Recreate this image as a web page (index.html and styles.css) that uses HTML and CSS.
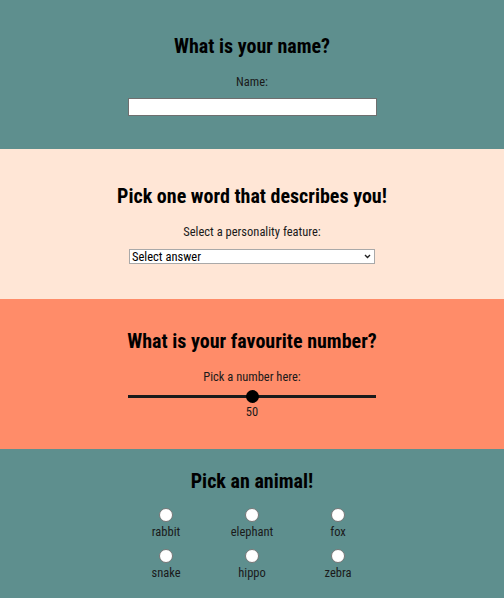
FILE: index.html
```html
<!DOCTYPE html>
<html lang="en">
<head>
<meta charset="utf-8">
<title>Quiz</title>
<link rel="stylesheet" href="styles.css">
</head>
<body>
<section class="section teal first">
  <h2 class="title">What is your name?</h2>
  <label class="label" for="name">Name:</label>
  <input class="text-input" id="name" type="text">
</section>
<section class="section peach">
  <h2 class="title">Pick one word that describes you!</h2>
  <label class="label" for="feature">Select a personality feature:</label>
  <select class="select" id="feature">
    <option>Select answer</option>
  </select>
</section>
<section class="section salmon">
  <h2 class="title">What is your favourite number?</h2>
  <label class="label" for="num">Pick a number here:</label>
  <input class="range" id="num" type="range" min="0" max="100" value="50">
  <div class="value">50</div>
</section>
<section class="section teal">
  <h2 class="title title-tight">Pick an animal!</h2>
  <div class="animals">
    <label class="animal"><input class="radio" type="radio" name="animal"><span>rabbit</span></label>
    <label class="animal"><input class="radio" type="radio" name="animal"><span>elephant</span></label>
    <label class="animal"><input class="radio" type="radio" name="animal"><span>fox</span></label>
    <label class="animal"><input class="radio" type="radio" name="animal"><span>snake</span></label>
    <label class="animal"><input class="radio" type="radio" name="animal"><span>hippo</span></label>
    <label class="animal"><input class="radio" type="radio" name="animal"><span>zebra</span></label>
  </div>
</section>
</body>
</html>
```
FILE: styles.css
```css
html, body {
  margin: 0;
  padding: 0;
}
body {
  font-family: "Roboto Condensed", Roboto, "Liberation Sans", sans-serif;
  font-stretch: 75%;
  color: #111;
}
.section {
  height: 150px;
  display: flex;
  flex-direction: column;
  align-items: center;
  justify-content: center;
}
.first {
  height: 149px;
}
.teal { background: #5e8f8e; }
.peach { background: #ffe6d6; }
.salmon { background: #ff8c69; }
.title {
  margin: 0 0 17px;
  font-size: 20px;
  line-height: 24px;
  font-weight: 700;
  color: #000;
}
.title-tight {
  margin-bottom: 15px;
}
.label {
  font-size: 12.5px;
  line-height: 14px;
  color: #1a1a1a;
}
.text-input {
  box-sizing: border-box;
  margin: 9px 0 0;
  width: 249px;
  height: 18px;
  border: 1px solid #6f6f6f;
  background: #fff;
  padding: 0 2px;
  font: inherit;
}
.select {
  -webkit-appearance: none;
  appearance: none;
  box-sizing: border-box;
  margin: 10px 0 0;
  width: 246px;
  height: 15px;
  border: 1px solid #a9a9a9;
  border-radius: 0;
  background: #fff url("data:image/svg+xml;utf8,<svg xmlns='http://www.w3.org/2000/svg' width='7' height='5' viewBox='0 0 7 5'><path d='M1 1 L3.5 3.5 L6 1' fill='none' stroke='%23222' stroke-width='1.4'/></svg>") no-repeat right 3px center;
  padding: 0 12px 0 2px;
  font-family: inherit;
  font-stretch: 75%;
  font-size: 12.5px;
  line-height: 13px;
  color: #000;
}
.range {
  -webkit-appearance: none;
  appearance: none;
  margin: 4px 0 0;
  width: 248px;
  height: 16px;
  background: transparent;
}
.range::-webkit-slider-runnable-track {
  height: 3px;
  background: #1a1a1a;
}
.range::-webkit-slider-thumb {
  -webkit-appearance: none;
  appearance: none;
  width: 13px;
  height: 13px;
  border-radius: 50%;
  background: #000;
  margin-top: -5px;
}
.value {
  font-size: 12.5px;
  line-height: 14px;
  margin-top: 1px;
  color: #1a1a1a;
}
.animals {
  display: grid;
  grid-template-columns: repeat(3, 86px);
  row-gap: 10px;
}
.animal {
  display: flex;
  flex-direction: column;
  align-items: center;
  gap: 3px;
  font-size: 12.5px;
  line-height: 14px;
  color: #1a1a1a;
}
.radio {
  -webkit-appearance: none;
  appearance: none;
  margin: 0;
  width: 14px;
  height: 14px;
  border-radius: 50%;
  border: 1px solid #767676;
  background: #fff;
  box-sizing: border-box;
}
```
